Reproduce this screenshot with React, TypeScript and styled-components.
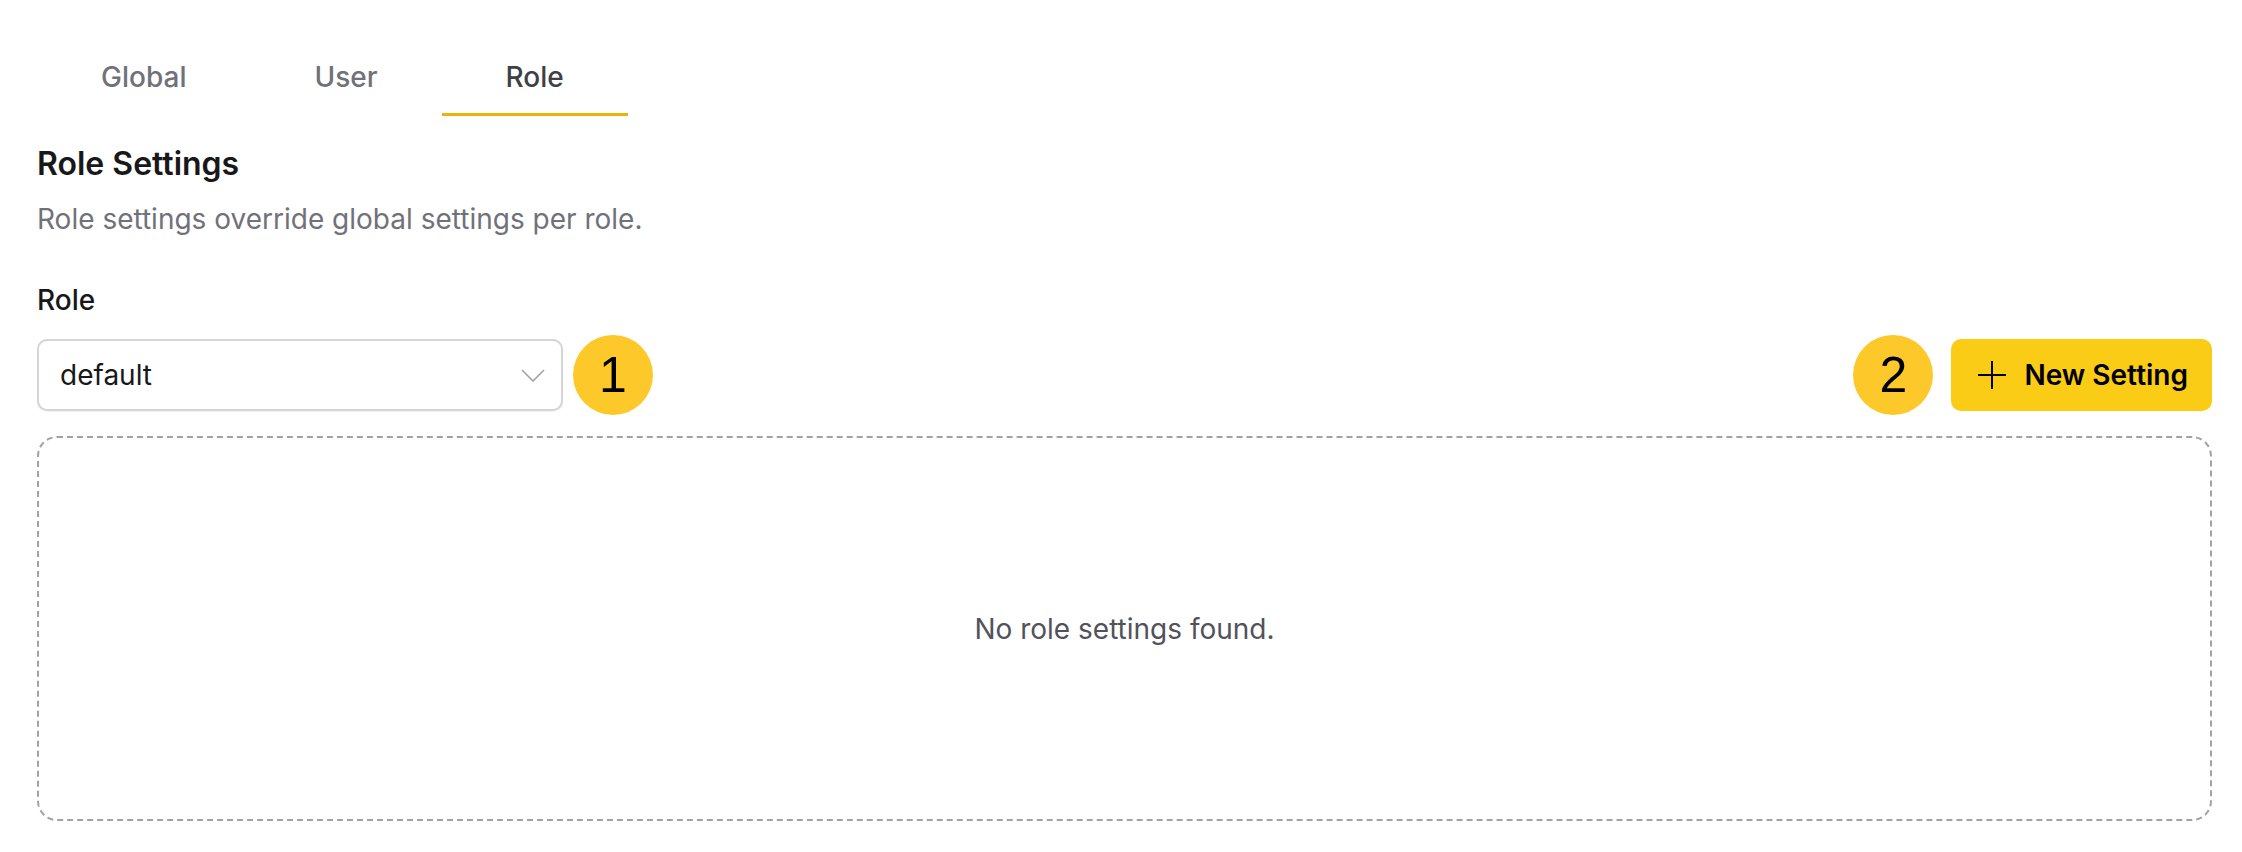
import * as React from 'react'
import styled, { createGlobalStyle } from 'styled-components'

const GlobalStyle = createGlobalStyle`
  html, body {
    margin: 0;
    padding: 0;
    background: #ffffff;
  }
  body {
    font-family: Inter, "Noto Sans", sans-serif;
    color: #18181b;
  }
`

const Page = styled.div`
  padding: 40px 30px 0 37px;
  box-sizing: border-box;
  width: 2242px;
`

const TabBar = styled.div`
  display: flex;
`

const Tab = styled.div<{ active?: boolean }>`
  height: 76px;
  box-sizing: border-box;
  padding: 0 64px;
  display: flex;
  align-items: center;
  font-size: 28px;
  font-weight: 500;
  color: ${p => (p.active ? '#3f3f46' : '#71717a')};
  border-bottom: 3px solid ${p => (p.active ? '#eab308' : 'transparent')};
`

const Heading = styled.h2`
  margin: 28px 0 0;
  font-size: 32px;
  line-height: 40px;
  font-weight: 600;
  color: #18181b;
`

const Description = styled.p`
  margin: 19px 0 0;
  font-size: 28px;
  line-height: 32px;
  color: #71717a;
`

const Label = styled.div`
  margin-top: 49px;
  font-size: 28px;
  line-height: 32px;
  font-weight: 500;
  color: #18181b;
`

const Toolbar = styled.div`
  margin-top: 19px;
  display: flex;
  align-items: center;
  justify-content: space-between;
`

const Row = styled.div<{ gap: number }>`
  display: flex;
  align-items: center;
  gap: ${p => p.gap}px;
`

const SelectBox = styled.div`
  width: 526px;
  height: 72px;
  box-sizing: border-box;
  border: 2px solid #d4d4d8;
  border-radius: 10px;
  box-shadow: 0 1px 2px rgba(0, 0, 0, 0.06);
  display: flex;
  align-items: center;
  justify-content: space-between;
  padding: 0 16px 0 21px;
  font-size: 28px;
  color: #18181b;
`

const Badge = styled.div`
  width: 80px;
  height: 80px;
  border-radius: 50%;
  background: #fdc829;
  display: flex;
  align-items: center;
  justify-content: center;
  font-family: "Liberation Sans", Arial, sans-serif;
  font-size: 50px;
  color: #000000;
`

const NewButton = styled.button`
  height: 72px;
  border: none;
  border-radius: 10px;
  background: #facc15;
  display: flex;
  align-items: center;
  gap: 17px;
  padding: 0 24px 0 26px;
  font-family: Inter, sans-serif;
  font-size: 28px;
  font-weight: 600;
  color: #000000;
  cursor: pointer;
`

const EmptyBox = styled.div`
  margin-top: 21px;
  height: 385px;
  box-sizing: border-box;
  border: 2px dashed #a1a1aa;
  border-radius: 20px;
  display: flex;
  align-items: center;
  justify-content: center;
  font-size: 28px;
  color: #52525b;
`

const Chevron = () => (
  <svg width="24" height="13" viewBox="0 0 24 13" fill="none">
    <path d="M1 1 L12 12 L23 1" stroke="#a1a1aa" strokeWidth="1.6" />
  </svg>
)

const PlusIcon = () => (
  <svg width="30" height="30" viewBox="0 0 30 30" fill="none">
    <path d="M15 1 V29 M1 15 H29" stroke="#000" strokeWidth="2" />
  </svg>
)

const tabs = ['Global', 'User', 'Role']

export default function App() {
  const [activeTab] = React.useState('Role')
  return (
    <Page>
      <GlobalStyle />
      <TabBar>
        {tabs.map(t => (
          <Tab key={t} active={t === activeTab}>{t}</Tab>
        ))}
      </TabBar>
      <Heading>Role Settings</Heading>
      <Description>Role settings override global settings per role.</Description>
      <Label>Role</Label>
      <Toolbar>
        <Row gap={10}>
          <SelectBox>
            <span>default</span>
            <Chevron />
          </SelectBox>
          <Badge>1</Badge>
        </Row>
        <Row gap={18}>
          <Badge>2</Badge>
          <NewButton>
            <PlusIcon />
            New Setting
          </NewButton>
        </Row>
      </Toolbar>
      <EmptyBox>No role settings found.</EmptyBox>
    </Page>
  )
}
